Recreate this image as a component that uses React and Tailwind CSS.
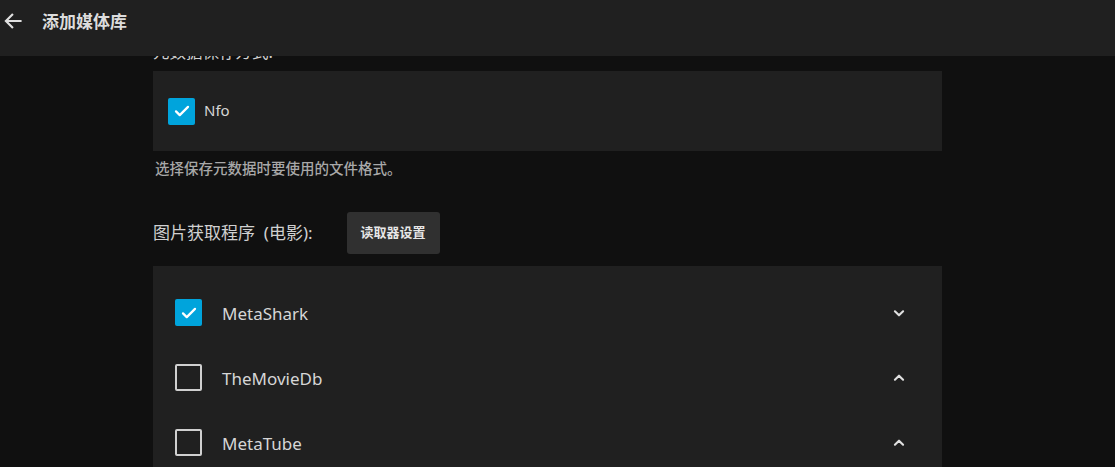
import React from "react";

const font = { fontFamily: '"Noto Sans", "Noto Sans CJK SC", sans-serif' };

function Check({ checked }) {
  if (checked) {
    return (
      <div className="w-[27px] h-[27px] rounded-[2px] bg-[#00a4dc] flex items-center justify-center shrink-0">
        <svg width="18" height="18" viewBox="0 0 24 24" fill="none" stroke="white" strokeWidth="3" strokeLinecap="round" strokeLinejoin="round">
          <path d="M4 12.5l5 5L20 6.5" />
        </svg>
      </div>
    );
  }
  return <div className="w-[27px] h-[27px] rounded-[2px] border-2 border-[#d0d0d0] shrink-0" />;
}

function Chevron({ up }) {
  return (
    <svg width="14" height="14" viewBox="0 0 24 24" fill="none" stroke="#e0e0e0" strokeWidth="3.6" strokeLinecap="round" strokeLinejoin="round">
      {up ? <path d="M5 15l7-7 7 7" /> : <path d="M5 9l7 7 7-7" />}
    </svg>
  );
}

function Row({ name, checked, up }) {
  return (
    <div className="h-[65px] flex items-center pl-[22px] pr-[36px]">
      <Check checked={checked} />
      <span className="ml-[20px] mt-[3px] text-[17px] text-[#d6d6d6] flex-1">{name}</span>
      <Chevron up={up} />
    </div>
  );
}

export default function App() {
  return (
    <div className="relative w-[1115px] h-[467px] bg-[#101010] overflow-hidden" style={font}>
      <div className="absolute top-0 left-0 right-0 h-[56px] bg-[#202020] z-10 flex items-center pb-[14px]">
        <svg className="ml-[3px]" width="20" height="20" viewBox="0 0 24 24" fill="none" stroke="#e0e0e0" strokeWidth="2.6" strokeLinecap="square">
          <path d="M21 12H4M11 4.5L3.5 12l7.5 7.5" />
        </svg>
        <span className="ml-[19px] mt-[2px] text-[17px] font-bold text-[#dcdcdc]">添加媒体库</span>
      </div>
      <div className="ml-[153px] w-[789px] pt-[40px]">
        <div className="text-[16.5px] text-[#d0d0d0] leading-[24px]">元数据保存方式:</div>
        <div className="mt-[7px] h-[80px] bg-[#202020] flex items-center pl-[15px]">
          <Check checked />
          <span className="ml-[9px] text-[15px] text-[#d6d6d6] -mt-[1px]">Nfo</span>
        </div>
        <div className="mt-[7px] ml-[2px] text-[14.5px] font-medium text-[#a8a8a8] leading-[20px]">选择保存元数据时要使用的文件格式。</div>
        <div className="mt-[34px] flex items-center">
          <span className="text-[17px] text-[#d0d0d0]">图片获取程序&nbsp;&nbsp;(电影):</span>
          <button className="ml-[34px] h-[42px] w-[93px] rounded-[3px] bg-[#303030] text-[13px] font-bold text-[#e6e6e6]">读取器设置</button>
        </div>
        <div className="mt-[12px] bg-[#202020] pt-[14px] pb-[20px]">
          <Row name="MetaShark" checked up={false} />
          <Row name="TheMovieDb" up />
          <Row name="MetaTube" up />
        </div>
      </div>
    </div>
  );
}
